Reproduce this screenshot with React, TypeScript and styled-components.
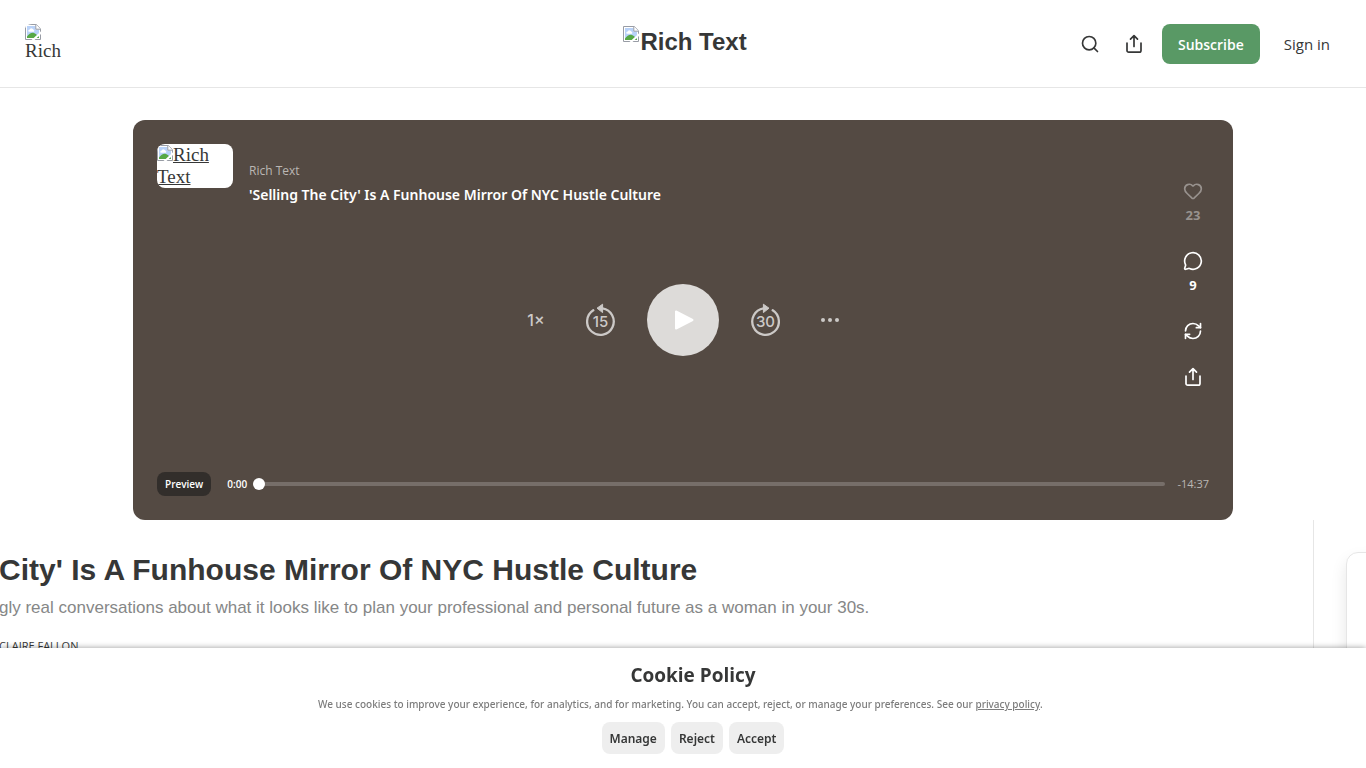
import React from "react";
import styled, { createGlobalStyle } from "styled-components";
import { Heart, MessageCircle, RefreshCw, Search } from "lucide-react";

const ui = `"Open Sans", "Noto Sans", sans-serif`;
const text = `"Noto Sans", "Open Sans", sans-serif`;
const heading = `"Liberation Sans", Arial, sans-serif`;
const serif = `"Liberation Serif", "Times New Roman", serif`;
const ink = "#363737";

const GlobalStyle = createGlobalStyle`
  *, *::before, *::after { box-sizing: border-box; }
  body { margin: 0; background: #fff; color: ${ink}; font-family: ${ui}; }
  h1, h2, h3, p { margin: 0; }
  button { border: 0; padding: 0; background: none; font: inherit; color: inherit; cursor: pointer; }
  a { color: inherit; text-decoration: none; }
  svg { display: block; flex: none; }
`;

const Page = styled.div`
  display: flex;
  flex-direction: column;
  min-height: 100vh;
`;

const TopBar = styled.header`
  display: grid;
  grid-template-columns: 1fr auto 1fr;
  height: 88px;
  padding: 24px 20px 23px 24px;
  border-bottom: 1px solid #e6e6e6;
`;

const PublicationIcon = styled.a`
  display: block;
  width: 40px;
  height: 40px;
  padding-left: 1px;
  border-radius: 8px;
  overflow: hidden;
  font: 19px/22px ${serif};
`;

const Wordmark = styled.h1`
  font: bold 24px/36px ${heading};
  a { display: flex; gap: 1px; }
  svg { margin-top: 2px; }
`;

const BarActions = styled.div`
  display: flex;
  justify-content: flex-end;
  gap: 8px;
`;

const IconGroup = styled.div`
  display: flex;
  gap: 4px;
`;

const IconButton = styled.button`
  display: grid;
  place-items: center;
  width: 40px;
  height: 40px;
`;

const BarButton = styled.button<{ $primary?: boolean }>`
  height: 40px;
  padding: 0 16px;
  border-radius: 8px;
  font-size: ${(p) => (p.$primary ? 14 : 15)}px;
  font-weight: ${(p) => (p.$primary ? 600 : 500)};
  color: ${(p) => (p.$primary ? "#fff" : ink)};
  background: ${(p) => (p.$primary ? "#599965" : "transparent")};
`;

const PlayerWrap = styled.div`
  padding: 32px 24px 0;
`;

const Player = styled.section`
  display: grid;
  grid-template: minmax(352px, auto) / 1fr;
  max-width: 1100px;
  margin: 0 auto;
  padding: 24px;
  border-radius: 12px;
  background: #544a43;
  color: #fff;
  > * { grid-area: 1 / 1; }
`;

const Episode = styled.div`
  display: flex;
  align-self: start;
  gap: 16px;
`;

const Cover = styled.a`
  width: 76px;
  height: 44px;
  border-radius: 8px;
  overflow: hidden;
  background: #fff;
  color: ${ink};
  font: 19px/22px ${serif};
  text-decoration: underline;
  svg { display: inline-block; vertical-align: 0; }
`;

const EpisodeText = styled.div`
  padding-top: 16px;
`;

const Show = styled.a`
  display: block;
  font-size: 12px;
  line-height: 22px;
  color: #bbb7b4;
`;

const EpisodeTitle = styled.h2`
  font-family: ${text};
  font-size: 14px;
  line-height: 26px;
  font-weight: 600;
`;

const Controls = styled.div`
  display: flex;
  place-self: center;
  align-items: center;
  gap: 32px;
  color: #ccc9c7;
`;

const Speed = styled.button`
  width: 36px;
  font: 500 16px/24px Inter, sans-serif;
`;

const More = styled.button`
  display: grid;
  place-items: center;
  width: 36px;
  height: 36px;
`;

const Play = styled.button`
  display: grid;
  place-items: center;
  width: 72px;
  height: 72px;
  border-radius: 50%;
  background: #dddbd9;
  color: #fff;
`;

const Reactions = styled.div`
  display: flex;
  flex-direction: column;
  justify-content: center;
  justify-self: end;
  gap: 26px;
  width: 32px;
  padding-bottom: 72px;
`;

const Reaction = styled.button<{ $muted?: boolean }>`
  display: flex;
  flex-direction: column;
  align-items: center;
  gap: 4px;
  font-size: 13px;
  line-height: 20px;
  font-weight: 700;
  color: ${(p) => (p.$muted ? "#98928e" : "#fff")};
`;

const Timeline = styled.div`
  display: flex;
  align-self: end;
  align-items: center;
  height: 24px;
`;

const Preview = styled.span`
  padding: 0 8px;
  margin-right: 16px;
  border-radius: 8px;
  background: #322e2b;
  font-size: 10px;
  line-height: 24px;
  font-weight: 600;
`;

const Time = styled.span<{ $left?: boolean }>`
  color: ${(p) => (p.$left ? "#bbb7b4" : "#fff")};
  font-size: ${(p) => (p.$left ? 11 : 10)}px;
  line-height: 24px;
  font-weight: ${(p) => (p.$left ? 400 : 600)};
`;

const Seek = styled.input`
  flex: 1;
  min-width: 0;
  height: 12px;
  margin: 0 12px 0 6px;
  appearance: none;
  background: transparent;
  &::-webkit-slider-runnable-track {
    height: 4px;
    border-radius: 2px;
    background: #766e69;
  }
  &::-webkit-slider-thumb {
    appearance: none;
    width: 12px;
    height: 12px;
    margin-top: -4px;
    border-radius: 50%;
    background: #fff;
  }
`;

const Post = styled.div`
  display: flex;
  flex: 1;
  overflow: hidden;
`;

const Article = styled.article`
  flex: 1;
  min-width: 0;
  padding-top: 32px;
  margin-left: -1px;
  white-space: nowrap;
`;

const PostTitle = styled.h2`
  font: bold 30px/36px ${heading};
`;

const Subtitle = styled.h3`
  margin-top: 8px;
  font: 17px/24px ${heading};
  color: #868787;
`;

const Byline = styled.p`
  margin-top: 18px;
  font-size: 11px;
  line-height: 16px;
  font-weight: 500;
`;

const Sidebar = styled.aside`
  display: flex;
  flex: none;
  width: 53px;
  padding: 32px 0 0 32px;
  border-left: 1px solid #e6e6e6;
`;

const Card = styled.div`
  flex: none;
  width: 300px;
  border: 1px solid #e6e6e6;
  border-radius: 12px;
  box-shadow: 0 8px 16px rgba(0, 0, 0, 0.1);
`;

const CookieBanner = styled.section`
  position: fixed;
  inset: auto 0 0 0;
  display: flex;
  flex-direction: column;
  align-items: center;
  padding: 14px 0 14px 20px;
  background: #fff;
  box-shadow: 0 0 6px rgba(0, 0, 0, 0.4);
`;

const CookieTitle = styled.h2`
  font-size: 19px;
  line-height: 26px;
  font-weight: 700;
`;

const CookieText = styled.p`
  width: 100%;
  max-width: 750px;
  margin: 8px 0 10px;
  font-family: ${text};
  font-size: 10px;
  line-height: 16px;
  font-weight: 500;
  color: #7c7c7c;
  a { text-decoration: underline; }
`;

const CookieActions = styled.div`
  display: flex;
  gap: 6px;
`;

const CookieButton = styled.button`
  height: 32px;
  padding: 0 8px;
  border-radius: 8px;
  background: #eee;
  font-family: ${text};
  font-size: 12px;
  font-weight: 600;
`;

function MissingImage() {
  return (
    <svg width="16" height="16" viewBox="0 0 16 16" aria-hidden="true">
      <path d="M.5.5h10.7l4.3 4.3v10.7H.5z" fill="#fff" stroke="#989ca5" />
      <path d="M2 2h8.6v3.6H14V14H2z" fill="#b9d2f8" />
      <path d="M3.4 7.4a1.5 1.5 0 0 1 1.3-2 2.2 2.2 0 0 1 4 .6 1.1 1.1 0 0 1 .2 1.8H4z" fill="#fff" />
      <path d="M2 14v-1.4C4 9.500 7 8 9 9c2 .8 3.500 2.400 5 4V14z" fill="#56a845" />
      <path d="M10.800.5v4.700h4.700" fill="#fff" stroke="#989ca5" />
      <path d="M16 7.300V10L9.500 16H6.500z" fill="#fff" />
    </svg>
  );
}

function ShareIcon() {
  return (
    <svg width="20" height="20" viewBox="0 0 20 20" fill="none" stroke="currentColor" strokeWidth="1.700" strokeLinecap="round" strokeLinejoin="round" aria-hidden="true">
      <path d="M10 12.500V1.800M6.500 5.200 10 1.700l3.500 3.500M3 9v7.500A1.700 1.700 0 0 0 4.700 18.200h10.600a1.700 1.700 0 0 0 1.700-1.700V9" />
    </svg>
  );
}

function SkipIcon({ seconds, forward }: { seconds: number; forward?: boolean }) {
  return (
    <svg width="29" height="34" viewBox="0 0 29 34" aria-hidden="true">
      <g transform={forward ? "matrix(-1 0 0 1 29 0)" : undefined}>
        <path d="M16.500 5.400A13.300 13.300 0 1 1 7.300 7.300" fill="none" stroke="currentColor" strokeWidth="2.300" strokeLinecap="round" />
        <path d="M11 5.200 16.600 1.200v8.400z" fill="currentColor" stroke="currentColor" strokeLinejoin="round" />
      </g>
      <text x="14.500" y="24" textAnchor="middle" fontFamily="Inter, sans-serif" fontSize="15" fontWeight="500" fill="currentColor">
        {seconds}
      </text>
    </svg>
  );
}

export default function App() {
  return (
    <Page>
      <GlobalStyle />
      <TopBar>
        <PublicationIcon href="#">
          <MissingImage />
          Rich
        </PublicationIcon>
        <Wordmark>
          <a href="#">
            <MissingImage />
            Rich Text
          </a>
        </Wordmark>
        <BarActions>
          <IconGroup>
            <IconButton aria-label="Search">
              <Search size={20} strokeWidth={2} />
            </IconButton>
            <IconButton aria-label="Share">
              <ShareIcon />
            </IconButton>
          </IconGroup>
          <BarButton $primary>Subscribe</BarButton>
          <BarButton>Sign in</BarButton>
        </BarActions>
      </TopBar>

      <PlayerWrap>
        <Player>
          <Episode>
            <Cover href="#">
              <MissingImage />
              Rich Text
            </Cover>
            <EpisodeText>
              <Show href="#">Rich Text</Show>
              <EpisodeTitle>'Selling The City' Is A Funhouse Mirror Of NYC Hustle Culture</EpisodeTitle>
            </EpisodeText>
          </Episode>

          <Controls>
            <Speed>1×</Speed>
            <button aria-label="Back 15 seconds">
              <SkipIcon seconds={15} />
            </button>
            <Play aria-label="Play">
              <svg width="24" height="24" viewBox="0 0 24 24" aria-hidden="true">
                <path d="M5 3.500v17l16.500-8.500z" fill="currentColor" stroke="currentColor" strokeWidth="2" strokeLinejoin="round" />
              </svg>
            </Play>
            <button aria-label="Forward 30 seconds">
              <SkipIcon seconds={30} forward />
            </button>
            <More aria-label="More">
              <svg width="20" height="6" viewBox="0 0 20 6" fill="currentColor" aria-hidden="true">
                <circle cx="3" cy="3" r="2" />
                <circle cx="10" cy="3" r="2" />
                <circle cx="17" cy="3" r="2" />
              </svg>
            </More>
          </Controls>

          <Reactions>
            <Reaction $muted aria-label="Like, 23">
              <Heart size={20} strokeWidth={2} />
              23
            </Reaction>
            <Reaction aria-label="Comments, 9">
              <MessageCircle size={20} strokeWidth={2} />
              9
            </Reaction>
            <Reaction aria-label="Restack">
              <RefreshCw size={20} strokeWidth={2} />
            </Reaction>
            <Reaction aria-label="Share">
              <ShareIcon />
            </Reaction>
          </Reactions>

          <Timeline>
            <Preview>Preview</Preview>
            <Time>0:00</Time>
            <Seek type="range" min={0} max={877} defaultValue={0} aria-label="Seek" />
            <Time $left>-14:37</Time>
          </Timeline>
        </Player>
      </PlayerWrap>

      <Post>
        <Article>
          <PostTitle>City' Is A Funhouse Mirror Of NYC Hustle Culture</PostTitle>
          <Subtitle>
            gly real conversations about what it looks like to plan your professional and personal future as a woman in your 30s.
          </Subtitle>
          <Byline>CLAIRE FALLON</Byline>
        </Article>
        <Sidebar>
          <Card />
        </Sidebar>
      </Post>

      <CookieBanner aria-labelledby="cookie-title">
        <CookieTitle id="cookie-title">Cookie Policy</CookieTitle>
        <CookieText>
          We use cookies to improve your experience, for analytics, and for marketing. You can accept, reject, or manage
          your preferences. See our <a href="#">privacy policy</a>.
        </CookieText>
        <CookieActions>
          <CookieButton>Manage</CookieButton>
          <CookieButton>Reject</CookieButton>
          <CookieButton>Accept</CookieButton>
        </CookieActions>
      </CookieBanner>
    </Page>
  );
}
